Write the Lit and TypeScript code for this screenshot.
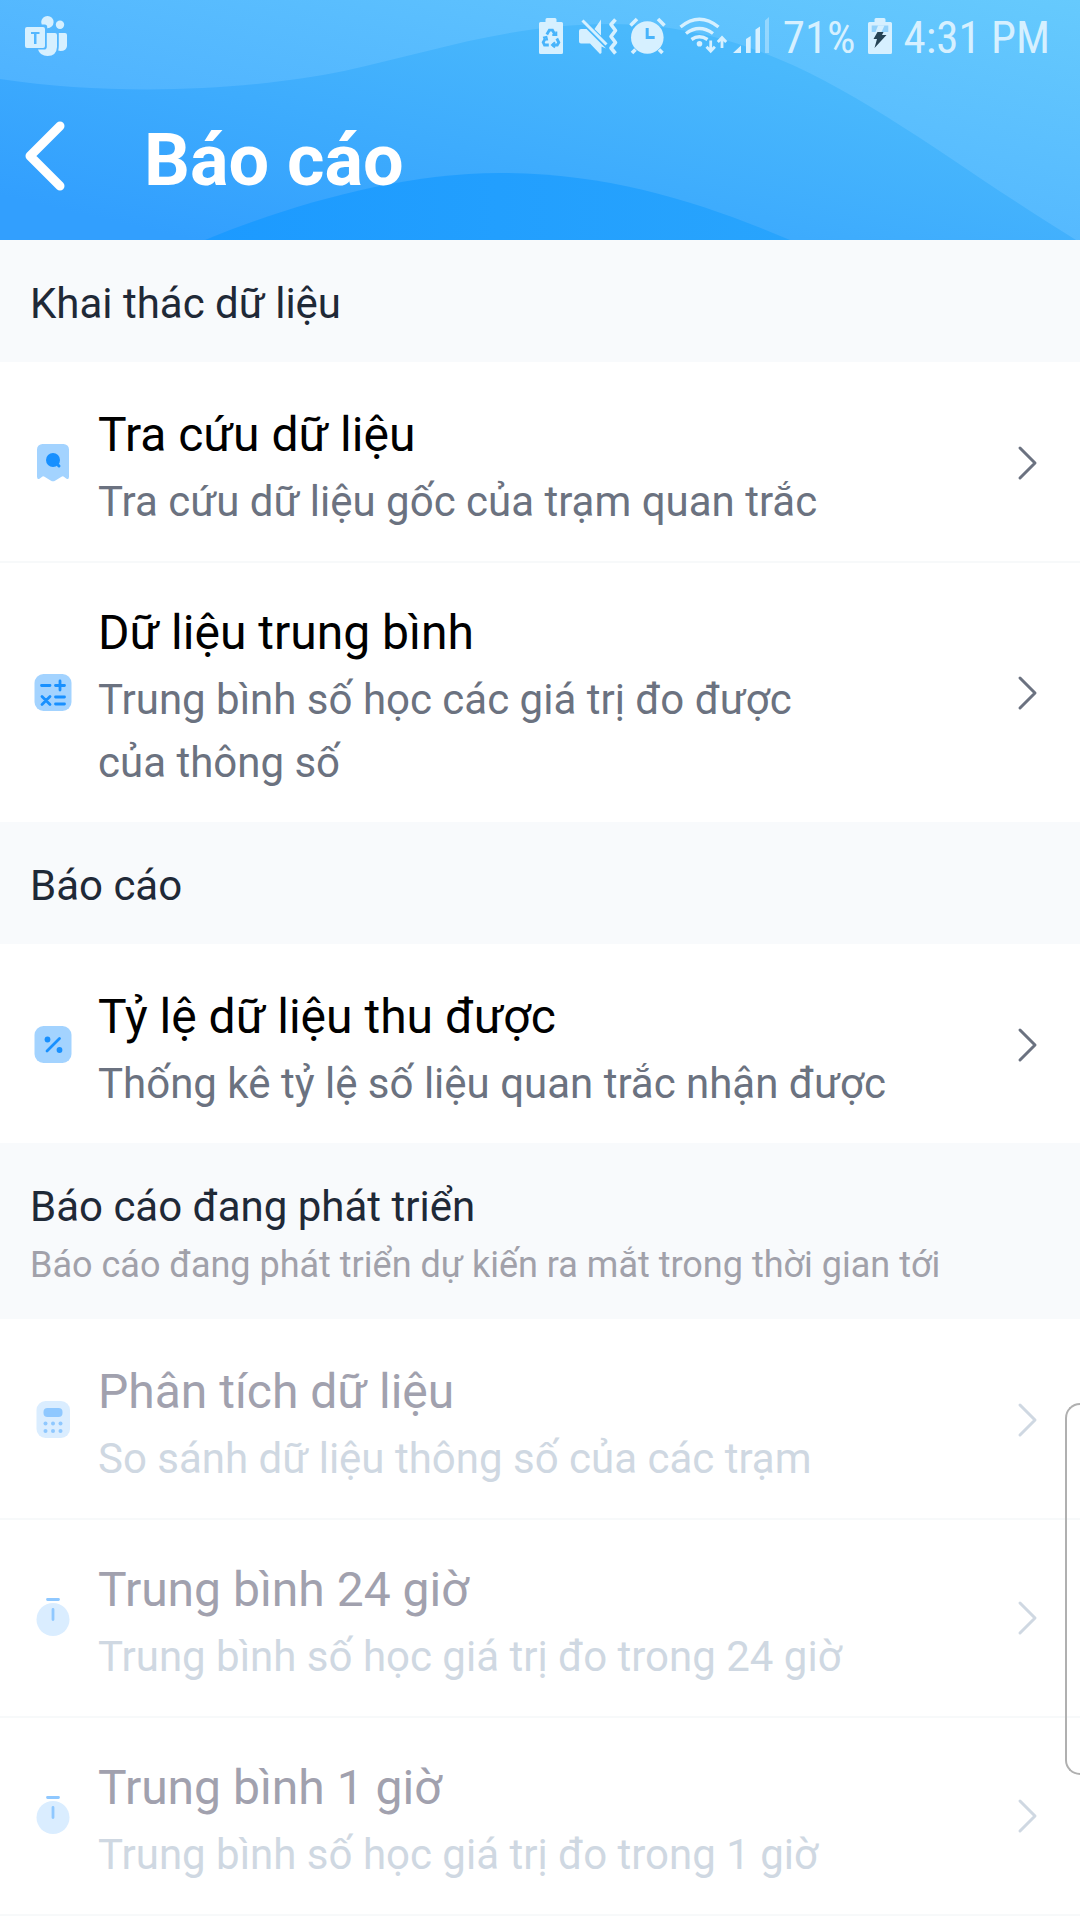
import { LitElement, html, css, svg, nothing } from "lit";
import { customElement, property } from "lit/decorators.js";

type IconName = "search" | "math" | "percent" | "calculator" | "timer";

interface ReportItem {
  icon: IconName;
  title: string;
  text: string;
}

interface ReportGroup {
  title: string;
  note?: string;
  pending?: boolean;
  items: ReportItem[];
}

const GROUPS: ReportGroup[] = [
  {
    title: "Khai thác dữ liệu",
    items: [
      { icon: "search", title: "Tra cứu dữ liệu", text: "Tra cứu dữ liệu gốc của trạm quan trắc" },
      { icon: "math", title: "Dữ liệu trung bình", text: "Trung bình số học các giá trị đo được\ncủa thông số" },
    ],
  },
  {
    title: "Báo cáo",
    items: [
      { icon: "percent", title: "Tỷ lệ dữ liệu thu được", text: "Thống kê tỷ lệ số liệu quan trắc nhận được" },
    ],
  },
  {
    title: "Báo cáo đang phát triển",
    note: "Báo cáo đang phát triển dự kiến ra mắt trong thời gian tới",
    pending: true,
    items: [
      { icon: "calculator", title: "Phân tích dữ liệu", text: "So sánh dữ liệu thông số của các trạm" },
      { icon: "timer", title: "Trung bình 24 giờ", text: "Trung bình số học giá trị đo trong 24 giờ" },
      { icon: "timer", title: "Trung bình 1 giờ", text: "Trung bình số học giá trị đo trong 1 giờ" },
    ],
  },
];

const ICONS = {
  search: svg`
    <path fill="#a3d3ff" d="M9.500 3h21a5.500 5.500 0 0 1 5.500 5.500v27q0 3.500-2.500 2.200l-3-2.300q-1-.6-2 .3l-6.500 4q-2 1.200-4 0l-6.500-4q-1-.9-2-.3l-3 2.300q-2.500 1.300-2.500-2.200v-27a5.500 5.500 0 0 1 5.500-5.500z"/>
    <circle cx="20" cy="19" r="7" fill="#1890ff"/>
    <path d="M23 22l3 3" stroke="#1890ff" stroke-width="3" stroke-linecap="round"/>`,
  math: svg`
    <rect x="1.500" y="3" width="37" height="37" rx="9" fill="#a3d3ff"/>
    <path d="M8.500 14.500h8.500M22.500 14.500h9M27 10v9M22.500 26h9M22.500 33h9M9 25.500l8 8M17 25.500l-8 8" fill="none" stroke="#1890ff" stroke-width="2.800" stroke-linecap="round"/>`,
  percent: svg`
    <rect x="1.500" y="3" width="37" height="37" rx="9" fill="#a3d3ff"/>
    <path d="M14 28l12.500-12.500" stroke="#1890ff" stroke-width="2.800" stroke-linecap="round"/>
    <circle cx="14.500" cy="16.500" r="2.900" fill="#1890ff"/>
    <circle cx="26.500" cy="27" r="2.900" fill="#1890ff"/>`,
  calculator: svg`
    <rect x="3.500" y="3" width="33.500" height="37" rx="9" fill="#daedff"/>
    <rect x="10.500" y="10" width="19" height="9" rx="4" fill="#8fc8ff"/>
    <g fill="#8fc8ff"><circle cx="12.500" cy="25.500" r="2"/><circle cx="20" cy="25.500" r="2"/><circle cx="27.500" cy="25.500" r="2"/><circle cx="12.500" cy="33" r="2"/><circle cx="20" cy="33" r="2"/><circle cx="27.500" cy="33" r="2"/></g>`,
  timer: svg`
    <circle cx="20" cy="23.500" r="16.500" fill="#daedff"/>
    <path d="M14.500 3.500h11M20 13.500v10" stroke="#8fc8ff" stroke-width="2.800" stroke-linecap="round"/>`,
};

const TEXT_FONT = css`Roboto, "Noto Sans", sans-serif`;

@customElement("status-bar")
export class StatusBar extends LitElement {
  static styles = css`
    :host {
      display: flex;
      align-items: center;
      justify-content: space-between;
      height: 72px;
      padding: 0 30px 0 24px;
      color: #d6f0ff;
      font-family: "Roboto Condensed", ${TEXT_FONT};
      font-size: 45px;
      line-height: 56px;
    }
    .side { display: flex; align-items: center; }
    .icon { display: block; height: 72px; fill: currentColor; }
    .teams { width: 44px; }
    .signals { width: 236px; }
    .value { padding-top: 4px; }
    .level { margin-left: 11px; }
    .battery { width: 26px; margin: 0 11px; }
    .line { fill: none; stroke: currentColor; }
    .cut { fill: none; stroke: #48b4fb; }
  `;

  render() {
    return html`
      <div class="side">
        <svg class="icon teams" viewBox="0 0 44 72" aria-hidden="true">
          <g transform="translate(0 12)">
            <path d="M17.200 10a6.200 6.200 0 1 1 6 6.300v-1.300q0-2.500-2.500-2.500h-3z"/>
            <circle cx="36" cy="12.700" r="4.200"/>
            <path d="M34.800 21h6.200q2 0 2 2v11q-.5 5-6.500 5q-1.200 0-2.300-.4q.6-2 .6-5z"/>
            <path d="M22.800 21h8.200q2 0 2 2v12q-.5 9-9.500 9q-7.500 0-9.500-6.500h6q2.800 0 2.800-2.800z"/>
            <path fill-rule="evenodd" d="M3 15h16q2 0 2 2v17q0 2-2 2h-16q-2 0-2-2v-17q0-2 2-2zM7 20v2h3v10h2.500v-10h3v-2z"/>
          </g>
        </svg>
      </div>
      <div class="side">
        <svg class="icon signals" viewBox="536 0 236 72" aria-hidden="true">
          <path d="M547 18h8q1.500 0 1.500 1.500v2.500h5q1.500 0 1.500 1.500v29q0 1.500-1.500 1.500h-21q-1.500 0-1.500-1.500v-29q0-1.500 1.500-1.500h5v-2.500q0-1.500 1.500-1.500z"/>
          <g class="cut" stroke-width="2.800">
            <path d="M546.800 34.500l2.500-4.300h3.200l2.500 4.500M556.800 38.500l2 4-1.500 2.500h-5M548.800 45h-4.300l-1.300-2.700 2.300-4"/>
            <path d="M552.300 35h4v-3.500M555 42.200l-3 2.800 3 2.600M543 37.700l3.400-.8.900 3.600" stroke-width="2"/>
          </g>
          <path d="M581 29h5.500l19.500 19.500-4.500-2v6.500l-1.500 1-10-10.500h-9q-2 0-2-2v-10.500q0-2 2-2zM594.500 29l6.500-9.500v16z"/>
          <path class="line" d="M582.500 20.500l24 24" stroke-width="3"/>
          <path class="line" d="M615.500 19.500l-4.500 5 4.500 6-4.500 6 4.500 6-4.500 5.500 4.500 5.500" stroke-width="3.600" stroke-linejoin="round"/>
          <circle cx="647.300" cy="37.500" r="16.300"/>
          <path class="line" d="M630.500 25.500l6.500-6.500M658 19l6.500 6.500M635.500 49.500l-3.500 3.500M659 49.500l3.500 3.500" stroke-width="3.600"/>
          <path class="cut" d="M647.200 28v9.500h7.500" stroke-width="3"/>
          <path class="line" d="M680.500 27q18.800-15.500 38 0M686 33.500q13.300-10 27 0M691.500 39.500q7.800-5.600 16 0" stroke-width="3.400"/>
          <circle cx="699.500" cy="43.800" r="2.800"/>
          <path class="line" d="M710.700 40.500v10M706.500 46.800l4.200 4.500 4.200-4.500M722 48v-9.500M717.800 42l4.200-4.500 4.200 4.500" stroke-width="2.800"/>
          <path d="M733 53l8-7.500v7.500zM746 53v-14l4.700-3v17zM755.500 53v-23.500l4.500-3v26.500z"/>
          <path d="M765 53v-32.500l4-3.500v36z" opacity="0.450"/>
        </svg>
        <span class="value level">71%</span>
        <svg class="icon battery" viewBox="0 0 26 72" aria-hidden="true">
          <path d="M9 18h8q1.500 0 1.500 1.500v2.500h5q1.500 0 1.500 1.500v29q0 1.500-1.500 1.500h-21q-1.500 0-1.500-1.500v-29q0-1.500 1.500-1.500h5v-2.500q0-1.500 1.500-1.500z"/>
          <path d="M4.700 25.500h16.600v6.500h-16.600z" fill="#93d2fb"/>
          <path d="M11 25.500h6.500l-3 6.500h-6z" fill="#d6f0ff"/>
          <path d="M10.500 32h6l-1.500 3h4.500l-12 13 2.500-9h-3.500z" fill="#254355"/>
        </svg>
        <span class="value">4:31 PM</span>
      </div>
    `;
  }
}

@customElement("report-row")
export class ReportRow extends LitElement {
  @property({ attribute: false }) item!: ReportItem;
  @property({ type: Boolean }) pending = false;

  static styles = css`
    :host { display: block; font-family: ${TEXT_FONT}; }
    .row {
      display: flex;
      align-items: center;
      width: 100%;
      box-sizing: border-box;
      padding: 28px 40px 28px 33px;
      border: 0;
      background: none;
      text-align: left;
      font: inherit;
    }
    .icon { flex: none; width: 40px; height: 44px; margin-right: 25px; }
    .copy { flex: 1; display: flex; flex-direction: column; padding: 6px 100px 0 0; }
    .title { color: #000000; font-size: 48px; line-height: 71px; }
    .text { color: #6b7280; font-size: 42px; line-height: 63px; white-space: pre-line; }
    .next { flex: none; width: 24px; height: 36px; fill: none; stroke: #6b7280; stroke-width: 3; stroke-linecap: round; stroke-linejoin: round; }
    .pending .title { color: #a1a1ae; }
    .pending .text { color: #cfd8e2; }
    .pending .next { stroke: #cfd8e2; }
  `;

  render() {
    return html`
      <button class="row ${this.pending ? "pending" : ""}" type="button" ?disabled=${this.pending}>
        <svg class="icon" viewBox="0 0 40 44" aria-hidden="true">${ICONS[this.item.icon]}</svg>
        <span class="copy">
          <span class="title">${this.item.title}</span>
          <span class="text">${this.item.text}</span>
        </span>
        <svg class="next" viewBox="0 0 24 36" aria-hidden="true"><path d="M4 3l15 15l-15 15"/></svg>
      </button>
    `;
  }
}

@customElement("app-root")
export class AppRoot extends LitElement {
  static styles = css`
    :host {
      display: block;
      position: relative;
      min-height: 100vh;
      background: #ffffff;
      font-family: ${TEXT_FONT};
    }
    .header { position: relative; color: #ffffff; }
    .waves { position: absolute; inset: 0; width: 100%; height: 100%; }
    .front { position: relative; }
    .bar { display: flex; align-items: center; gap: 72px; height: 168px; box-sizing: border-box; padding: 0 16px; }
    .back { width: 56px; height: 88px; padding: 0; border: 0; background: none; }
    .back-icon { display: block; width: 56px; height: 88px; fill: none; stroke: #ffffff; stroke-width: 9; stroke-linecap: round; stroke-linejoin: round; }
    .heading { margin: 0; padding-top: 10px; font-size: 72px; line-height: 96px; font-weight: 700; }
    .section { padding: 32px 30px 27px; background: #f8fafc; }
    .section-title { margin: 0; color: #1f2937; font-size: 42px; line-height: 63px; font-weight: 400; }
    .note { margin: 0; color: #a1a1aa; font-size: 36px; line-height: 54px; }
    .list { margin: 0; padding: 3px 0 0; list-style: none; }
    .entry { border-bottom: 2px solid #f7f9fa; }
    .closed .entry:last-child { border-bottom: 0; }
    .edge {
      position: absolute;
      right: 0;
      top: 1403px;
      width: 15px;
      height: 372px;
      box-sizing: border-box;
      border: 2px solid #b0b0b0;
      border-right: 0;
      border-radius: 20px 0 0 20px;
    }
  `;

  render() {
    return html`
      <header class="header">
        <svg class="waves" viewBox="0 0 1080 240" preserveAspectRatio="none" aria-hidden="true">
          <defs>
            <linearGradient id="sky" gradientUnits="userSpaceOnUse" x1="0" y1="80" x2="74" y2="-236">
              <stop offset="0" stop-color="#4fb3ff"/><stop offset="1" stop-color="#66cafd"/>
            </linearGradient>
            <linearGradient id="mid" gradientUnits="userSpaceOnUse" x1="190" y1="240" x2="259" y2="-56">
              <stop offset="0" stop-color="#329ffe"/><stop offset="1" stop-color="#4ab9fc"/>
            </linearGradient>
            <linearGradient id="low" x1="0" y1="0" x2="1" y2="0">
              <stop offset="0" stop-color="#1c9aff"/><stop offset="1" stop-color="#28a4fd"/>
            </linearGradient>
          </defs>
          <path d="M0 0h1080v240h-1080z" fill="url(#sky)"/>
          <path d="M0 79C120 97 250 90 344 71C430 52 510 24 610 24C790 24 900 132 1076 240H0z" fill="url(#mid)"/>
          <path d="M205 240C290 205 400 173 499 173C610 173 700 202 790 240z" fill="url(#low)"/>
        </svg>
        <div class="front">
          <status-bar></status-bar>
          <div class="bar">
            <button class="back" type="button" aria-label="Quay lại">
              <svg class="back-icon" viewBox="0 0 56 88" aria-hidden="true"><path d="M44 14l-30 30l30 30"/></svg>
            </button>
            <h1 class="heading">Báo cáo</h1>
          </div>
        </div>
      </header>
      <main>
        ${GROUPS.map((group) => html`
          <section>
            <div class="section">
              <h2 class="section-title">${group.title}</h2>
              ${group.note ? html`<p class="note">${group.note}</p>` : nothing}
            </div>
            <ul class="list ${group.pending ? "" : "closed"}">
              ${group.items.map((item) => html`
                <li class="entry"><report-row .item=${item} .pending=${!!group.pending}></report-row></li>
              `)}
            </ul>
          </section>
        `)}
      </main>
      <div class="edge"></div>
    `;
  }
}
